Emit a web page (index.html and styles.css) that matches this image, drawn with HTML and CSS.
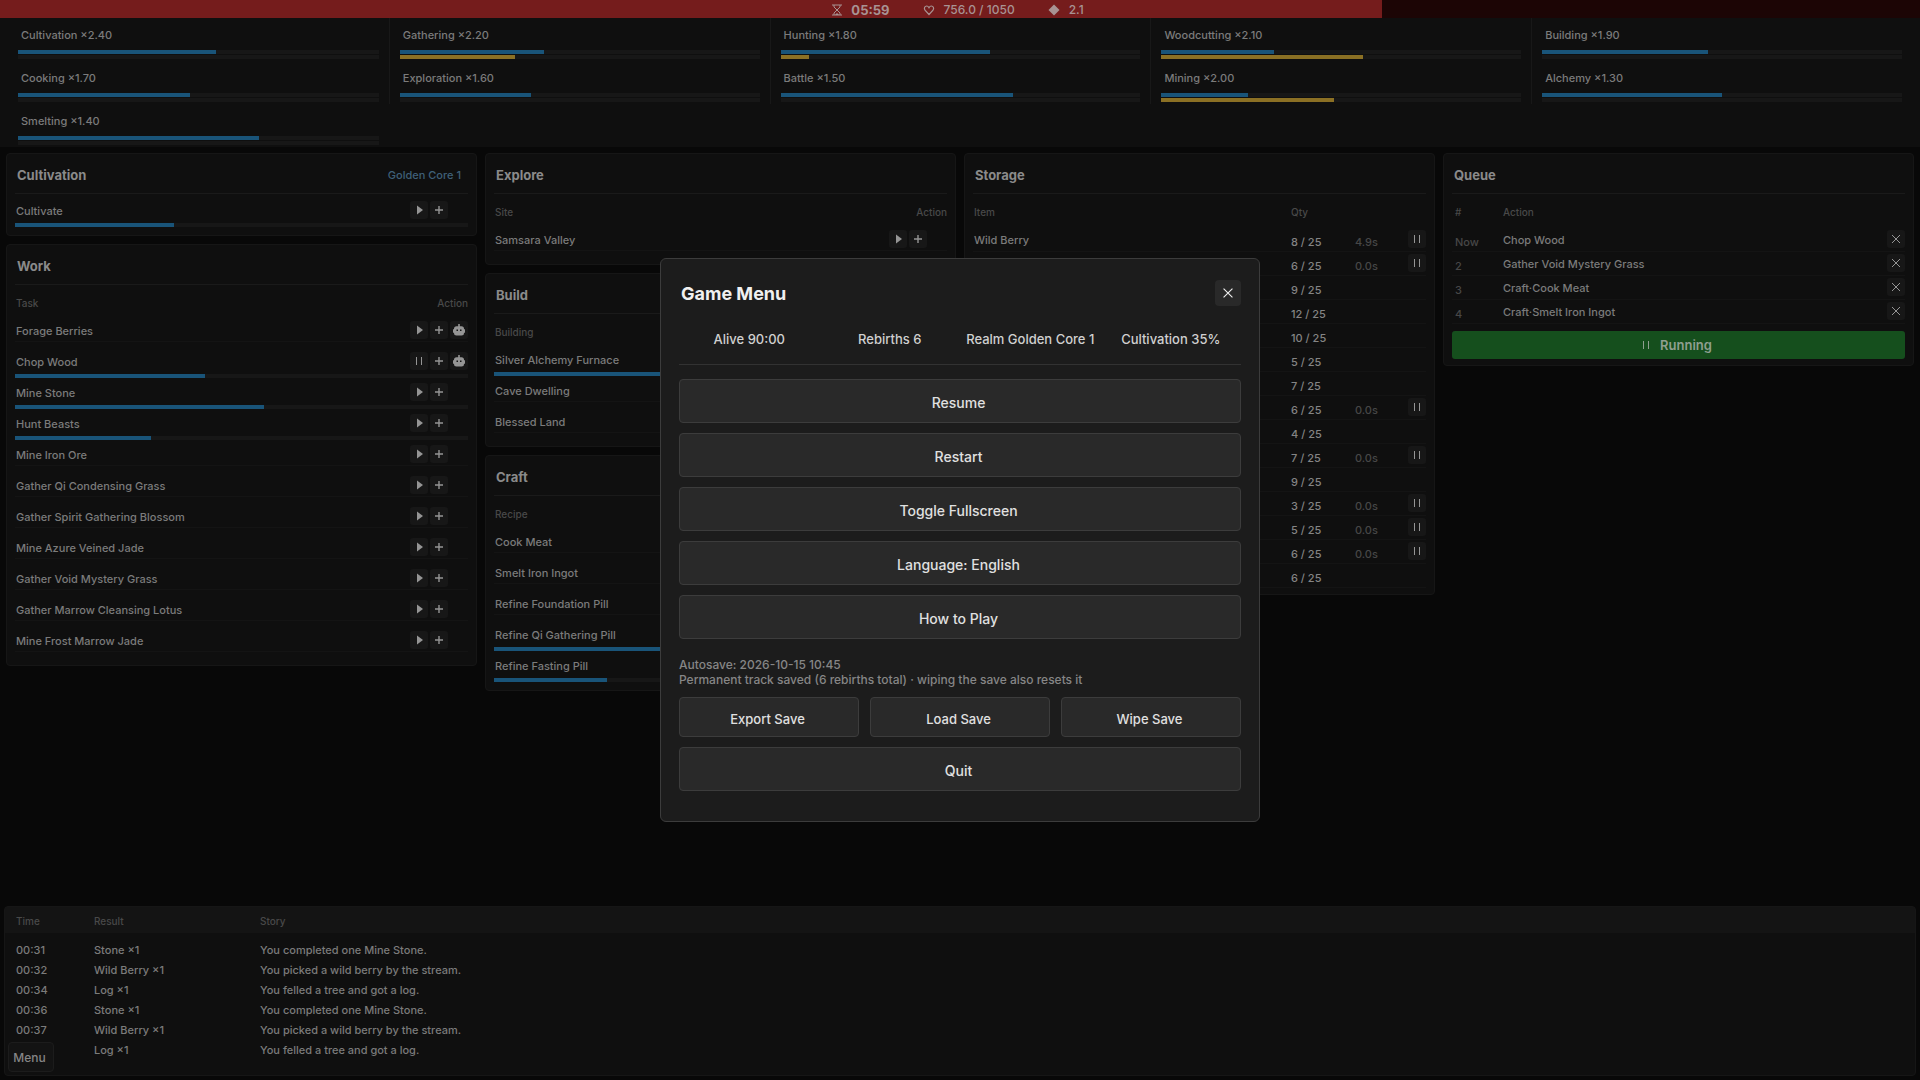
FILE: index.html
```html
<!DOCTYPE html>
<html lang="en">
<head>
<meta charset="utf-8">
<title>Game Menu</title>
<link rel="stylesheet" href="styles.css">
</head>
<body>
<svg class="sprite" aria-hidden="true">
  <symbol id="play" viewBox="0 0 18 18"><path d="M7 4.500l6 4.500-6 4.500z" fill="currentColor"/></symbol>
  <symbol id="plus" viewBox="0 0 18 18"><path d="M5 9h8M9 5v8" stroke="currentColor" stroke-width="1.400" fill="none"/></symbol>
  <symbol id="pause" viewBox="0 0 18 18"><path d="M6.500 5v8M11.500 5v8" stroke="currentColor" fill="none"/></symbol>
  <symbol id="cross" viewBox="0 0 18 18"><path d="M5 5l8 8M13 5l-8 8" stroke="currentColor" fill="none"/></symbol>
  <symbol id="robot" viewBox="0 0 18 18"><path fill="currentColor" fill-rule="evenodd" d="M8.200 3h1.600v2.200h1.700a2.500 2.500 0 0 1 2.500 2.500v.600h1v3.400h-1v.300a2.500 2.500 0 0 1-2.500 2.500h-5A2.500 2.500 0 0 1 4 12v-.300H3V8.300h1v-.600a2.500 2.500 0 0 1 2.500-2.500h1.700zM6.500 8.500V10H8V8.500zM10 8.500V10h1.500V8.500z"/></symbol>
</svg>

<div class="game">
  <header class="vitals">
    <div class="vitals-fill" style="width:72%"></div>
    <div class="vitals-text">
      <span class="vital strong"><svg width="10" height="12" viewBox="0 0 10 12"><path d="M0 1h10M0 11h10M2 1v2l3 3 3-3V1M2 11V9l3-3 3 3v2" fill="none" stroke="currentColor"/><path d="M3 11l2-2 2 2z" fill="currentColor"/></svg>05:59</span>
      <span class="vital"><svg width="12" height="12" viewBox="0 0 12 12"><path d="M6 10.500L2 6.200C.500 4 2 2 3.700 2 5 2 5.600 3 6 3.700 6.400 3 7 2 8.300 2 10 2 11.500 4 10 6.200z" fill="none" stroke="currentColor" stroke-width="1.200"/></svg>756.0 / 1050</span>
      <span class="vital"><svg width="12" height="12" viewBox="0 0 12 12"><path d="M6 .500L11.500 6 6 11.500.500 6z" fill="currentColor"/></svg>2.1</span>
    </div>
  </header>

  <section class="skills">
    <div class="skill"><span>Cultivation ×2.40</span><div class="bar"><i style="width:55%"></i></div><div class="bar gold"></div></div>
    <div class="skill"><span>Gathering ×2.20</span><div class="bar"><i style="width:40%"></i></div><div class="bar gold"><i style="width:32%"></i></div></div>
    <div class="skill"><span>Hunting ×1.80</span><div class="bar"><i style="width:58.200%"></i></div><div class="bar gold"><i style="width:8%"></i></div></div>
    <div class="skill"><span>Woodcutting ×2.10</span><div class="bar"><i style="width:31.300%"></i></div><div class="bar gold"><i style="width:56%"></i></div></div>
    <div class="skill"><span>Building ×1.90</span><div class="bar"><i style="width:46%"></i></div><div class="bar gold"></div></div>
    <div class="skill"><span>Cooking ×1.70</span><div class="bar"><i style="width:47.600%"></i></div><div class="bar gold"></div></div>
    <div class="skill"><span>Exploration ×1.60</span><div class="bar"><i style="width:36.600%"></i></div><div class="bar gold"></div></div>
    <div class="skill"><span>Battle ×1.50</span><div class="bar"><i style="width:64.700%"></i></div><div class="bar gold"></div></div>
    <div class="skill"><span>Mining ×2.00</span><div class="bar"><i style="width:24.200%"></i></div><div class="bar gold"><i style="width:48%"></i></div></div>
    <div class="skill"><span>Alchemy ×1.30</span><div class="bar"><i style="width:50%"></i></div><div class="bar gold"></div></div>
    <div class="skill"><span>Smelting ×1.40</span><div class="bar"><i style="width:66.700%"></i></div><div class="bar gold"></div></div>
  </section>

  <main class="board">
    <div class="column">
      <section class="card">
        <div class="card-head"><h2>Cultivation</h2><span class="realm">Golden Core 1</span></div>
        <table class="tasks">
          <tr class="busy"><td>Cultivate</td><td class="acts"><button class="mini" aria-label="Start"><svg><use href="#play"/></svg></button><button class="mini" aria-label="Add"><svg><use href="#plus"/></svg></button></td><td class="track"><div class="bar"><i style="width:35%"></i></div></td></tr>
        </table>
      </section>
      <section class="card">
        <div class="card-head"><h2>Work</h2></div>
        <table class="tasks">
          <tr class="labels"><th>Task</th><th>Action</th></tr>
          <tr><td>Forage Berries</td><td class="acts"><button class="mini" aria-label="Start"><svg><use href="#play"/></svg></button><button class="mini" aria-label="Add"><svg><use href="#plus"/></svg></button><button class="mini" aria-label="Automate"><svg><use href="#robot"/></svg></button></td></tr>
          <tr class="busy"><td>Chop Wood</td><td class="acts"><button class="mini" aria-label="Pause"><svg><use href="#pause"/></svg></button><button class="mini" aria-label="Add"><svg><use href="#plus"/></svg></button><button class="mini" aria-label="Automate"><svg><use href="#robot"/></svg></button></td><td class="track"><div class="bar"><i style="width:42%"></i></div></td></tr>
          <tr class="busy"><td>Mine Stone</td><td class="acts"><button class="mini" aria-label="Start"><svg><use href="#play"/></svg></button><button class="mini" aria-label="Add"><svg><use href="#plus"/></svg></button></td><td class="track"><div class="bar"><i style="width:55%"></i></div></td></tr>
          <tr class="busy"><td>Hunt Beasts</td><td class="acts"><button class="mini" aria-label="Start"><svg><use href="#play"/></svg></button><button class="mini" aria-label="Add"><svg><use href="#plus"/></svg></button></td><td class="track"><div class="bar"><i style="width:30%"></i></div></td></tr>
          <tr><td>Mine Iron Ore</td><td class="acts"><button class="mini" aria-label="Start"><svg><use href="#play"/></svg></button><button class="mini" aria-label="Add"><svg><use href="#plus"/></svg></button></td></tr>
          <tr><td>Gather Qi Condensing Grass</td><td class="acts"><button class="mini" aria-label="Start"><svg><use href="#play"/></svg></button><button class="mini" aria-label="Add"><svg><use href="#plus"/></svg></button></td></tr>
          <tr><td>Gather Spirit Gathering Blossom</td><td class="acts"><button class="mini" aria-label="Start"><svg><use href="#play"/></svg></button><button class="mini" aria-label="Add"><svg><use href="#plus"/></svg></button></td></tr>
          <tr><td>Mine Azure Veined Jade</td><td class="acts"><button class="mini" aria-label="Start"><svg><use href="#play"/></svg></button><button class="mini" aria-label="Add"><svg><use href="#plus"/></svg></button></td></tr>
          <tr><td>Gather Void Mystery Grass</td><td class="acts"><button class="mini" aria-label="Start"><svg><use href="#play"/></svg></button><button class="mini" aria-label="Add"><svg><use href="#plus"/></svg></button></td></tr>
          <tr><td>Gather Marrow Cleansing Lotus</td><td class="acts"><button class="mini" aria-label="Start"><svg><use href="#play"/></svg></button><button class="mini" aria-label="Add"><svg><use href="#plus"/></svg></button></td></tr>
          <tr><td>Mine Frost Marrow Jade</td><td class="acts"><button class="mini" aria-label="Start"><svg><use href="#play"/></svg></button><button class="mini" aria-label="Add"><svg><use href="#plus"/></svg></button></td></tr>
        </table>
      </section>
    </div>

    <div class="column">
      <section class="card">
        <div class="card-head"><h2>Explore</h2></div>
        <table class="tasks">
          <tr class="labels"><th>Site</th><th>Action</th></tr>
          <tr><td>Samsara Valley</td><td class="acts"><button class="mini" aria-label="Start"><svg><use href="#play"/></svg></button><button class="mini" aria-label="Add"><svg><use href="#plus"/></svg></button></td></tr>
        </table>
      </section>
      <section class="card">
        <div class="card-head"><h2>Build</h2></div>
        <table class="tasks">
          <tr class="labels"><th>Building</th><th></th></tr>
          <tr class="busy"><td>Silver Alchemy Furnace</td><td class="acts"></td><td class="track"><div class="bar"><i style="width:60%"></i></div></td></tr>
          <tr><td>Cave Dwelling</td><td class="acts"></td></tr>
          <tr><td>Blessed Land</td><td class="acts"></td></tr>
        </table>
      </section>
      <section class="card">
        <div class="card-head"><h2>Craft</h2></div>
        <table class="tasks">
          <tr class="labels"><th>Recipe</th><th></th></tr>
          <tr><td>Cook Meat</td><td class="acts"></td></tr>
          <tr><td>Smelt Iron Ingot</td><td class="acts"></td></tr>
          <tr><td>Refine Foundation Pill</td><td class="acts"></td></tr>
          <tr class="busy"><td>Refine Qi Gathering Pill</td><td class="acts"></td><td class="track"><div class="bar"><i style="width:60%"></i></div></td></tr>
          <tr class="busy"><td>Refine Fasting Pill</td><td class="acts"></td><td class="track"><div class="bar"><i style="width:25%"></i></div></td></tr>
        </table>
      </section>
    </div>

    <div class="column">
      <section class="card snug">
        <div class="card-head"><h2>Storage</h2></div>
        <table class="rows stock">
          <tr class="labels"><th>Item</th><th>Qty</th><th></th><th></th></tr>
          <tr><td>Wild Berry</td><td class="qty">8 / 25</td><td class="dim">4.9s</td><td class="end"><button class="mini" aria-label="Pause"><svg><use href="#pause"/></svg></button></td></tr>
          <tr><td></td><td class="qty">6 / 25</td><td class="dim">0.0s</td><td class="end"><button class="mini" aria-label="Pause"><svg><use href="#pause"/></svg></button></td></tr>
          <tr><td></td><td class="qty">9 / 25</td><td></td><td></td></tr>
          <tr><td></td><td class="qty">12 / 25</td><td></td><td></td></tr>
          <tr><td></td><td class="qty">10 / 25</td><td></td><td></td></tr>
          <tr><td></td><td class="qty">5 / 25</td><td></td><td></td></tr>
          <tr><td></td><td class="qty">7 / 25</td><td></td><td></td></tr>
          <tr><td></td><td class="qty">6 / 25</td><td class="dim">0.0s</td><td class="end"><button class="mini" aria-label="Pause"><svg><use href="#pause"/></svg></button></td></tr>
          <tr><td></td><td class="qty">4 / 25</td><td></td><td></td></tr>
          <tr><td></td><td class="qty">7 / 25</td><td class="dim">0.0s</td><td class="end"><button class="mini" aria-label="Pause"><svg><use href="#pause"/></svg></button></td></tr>
          <tr><td></td><td class="qty">9 / 25</td><td></td><td></td></tr>
          <tr><td></td><td class="qty">3 / 25</td><td class="dim">0.0s</td><td class="end"><button class="mini" aria-label="Pause"><svg><use href="#pause"/></svg></button></td></tr>
          <tr><td></td><td class="qty">5 / 25</td><td class="dim">0.0s</td><td class="end"><button class="mini" aria-label="Pause"><svg><use href="#pause"/></svg></button></td></tr>
          <tr><td></td><td class="qty">6 / 25</td><td class="dim">0.0s</td><td class="end"><button class="mini" aria-label="Pause"><svg><use href="#pause"/></svg></button></td></tr>
          <tr><td></td><td class="qty">6 / 25</td><td></td><td></td></tr>
        </table>
      </section>
    </div>

    <div class="column">
      <section class="card snug">
        <div class="card-head"><h2>Queue</h2></div>
        <table class="rows queue">
          <tr class="labels"><th>#</th><th>Action</th><th></th></tr>
          <tr><td class="dim">Now</td><td>Chop Wood</td><td class="end"><button class="mini" aria-label="Remove"><svg><use href="#cross"/></svg></button></td></tr>
          <tr><td class="dim">2</td><td>Gather Void Mystery Grass</td><td class="end"><button class="mini" aria-label="Remove"><svg><use href="#cross"/></svg></button></td></tr>
          <tr><td class="dim">3</td><td>Craft·Cook Meat</td><td class="end"><button class="mini" aria-label="Remove"><svg><use href="#cross"/></svg></button></td></tr>
          <tr><td class="dim">4</td><td>Craft·Smelt Iron Ingot</td><td class="end"><button class="mini" aria-label="Remove"><svg><use href="#cross"/></svg></button></td></tr>
        </table>
        <button class="running"><svg><use href="#pause"/></svg>Running</button>
      </section>
    </div>
  </main>

  <footer class="log">
    <table>
      <thead><tr><th>Time</th><th>Result</th><th>Story</th></tr></thead>
      <tbody>
        <tr><td>00:31</td><td>Stone ×1</td><td>You completed one Mine Stone.</td></tr>
        <tr><td>00:32</td><td>Wild Berry ×1</td><td>You picked a wild berry by the stream.</td></tr>
        <tr><td>00:34</td><td>Log ×1</td><td>You felled a tree and got a log.</td></tr>
        <tr><td>00:36</td><td>Stone ×1</td><td>You completed one Mine Stone.</td></tr>
        <tr><td>00:37</td><td>Wild Berry ×1</td><td>You picked a wild berry by the stream.</td></tr>
        <tr><td></td><td>Log ×1</td><td>You felled a tree and got a log.</td></tr>
      </tbody>
    </table>
    <button class="menu-button">Menu</button>
  </footer>
</div>

<div class="overlay">
  <div class="dialog" role="dialog" aria-labelledby="menu-title">
    <div class="dialog-head"><h1 id="menu-title">Game Menu</h1><button class="close" aria-label="Close"><svg><use href="#cross"/></svg></button></div>
    <div class="stats"><span>Alive 90:00</span><span>Rebirths 6</span><span>Realm Golden Core 1</span><span>Cultivation 35%</span></div>
    <div class="choices">
      <button class="choice">Resume</button>
      <button class="choice">Restart</button>
      <button class="choice">Toggle Fullscreen</button>
      <button class="choice">Language: English</button>
      <button class="choice">How to Play</button>
    </div>
    <p class="note">Autosave: 2026-10-15 10:45<br>Permanent track saved (6 rebirths total) · wiping the save also resets it</p>
    <div class="saves"><button class="choice small">Export Save</button><button class="choice small">Load Save</button><button class="choice small">Wipe Save</button></div>
    <button class="choice">Quit</button>
  </div>
</div>
</body>
</html>
```
FILE: styles.css
```css
* { box-sizing: border-box; }
body {
  margin: 0;
  background: #080808;
  color: #7b7b7b;
  font: 500 11px/16px Inter, "Liberation Sans", sans-serif;
}
button {
  margin: 0;
  padding: 0;
  border: 0;
  font: inherit;
  color: inherit;
}
h1, h2, p { margin: 0; }
table { width: 100%; border-collapse: collapse; }
td, th { padding: 0; text-align: left; font-weight: inherit; }
.sprite { display: none; }
.game { display: flex; flex-direction: column; min-height: 100vh; }

/* health strip */
.vitals { position: relative; height: 18px; background: #1c0505; }
.vitals-fill { height: 100%; background: #751c1c; }
.vitals-text {
  position: absolute;
  inset: 0;
  display: flex;
  justify-content: center;
  gap: 33px;
  padding: 2px 4px 0 0;
  color: #a89393;
  font-size: 12px;
}
.vital { display: flex; align-items: center; gap: 9px; }
.strong { font-size: 13px; font-weight: 700; }

/* skills */
.skills {
  display: grid;
  grid-template-columns: repeat(5, 1fr);
  padding: 0 8px;
  background: #0f0f0f;
}
.skill { height: 43px; padding: 9px 10px 0; border-left: 1px solid #181818; }
.skill:nth-child(5n+1) { border-left: 0; }
.skill span { display: block; height: 23px; padding-left: 3px; }
.bar { height: 4px; background: #171717; }
.bar i { display: block; height: 100%; background: #195479; }
.bar.gold { margin-top: 1px; }
.bar.gold i { background: #8b7024; }

/* cards */
.board {
  display: grid;
  grid-template-columns: repeat(4, 1fr);
  gap: 8px;
  padding: 6px;
  flex: 1;
}
.column { display: flex; flex-direction: column; gap: 8px; }
.card {
  padding: 8px;
  border: 1px solid #161616;
  border-radius: 4px;
  background: #0f0f0f;
}
.snug { padding-bottom: 6px; }
.card-head {
  display: flex;
  justify-content: space-between;
  align-items: center;
  height: 32px;
  padding: 0 7px 5px 2px;
  margin-bottom: 2px;
  border-bottom: 1px solid #1a1a1a;
}
h2 { font-size: 13px; font-weight: 700; color: #8a8a8a; }
.realm { color: #3f6078; }
.labels { color: #494949; font-size: 10px; }

.tasks, .tasks tbody { display: block; }
.tasks tr {
  display: grid;
  grid-template-columns: 1fr 58px;
  grid-template-rows: 20px 6px;
  height: 31px;
  padding-top: 5px;
}
.tasks td:first-child, .tasks th:first-child { padding: 2px 0 0 1px; }
.tasks tr::after { content: ""; grid-column: 1 / -1; height: 1px; background: #141414; }
.tasks .busy::after { display: none; }
.tasks .labels { height: 29px; padding-top: 6px; }
.tasks .labels::after { display: none; }
.tasks th:last-child { text-align: right; padding-top: 2px; }
.acts { display: flex; gap: 2px; }
.tasks .track { grid-column: 1 / -1; padding-top: 2px; }

.mini {
  display: block;
  width: 18px;
  height: 18px;
  border-radius: 3px;
  background: #171717;
  color: #959595;
}
.mini svg { display: block; width: 18px; height: 18px; }

.rows { table-layout: fixed; }
.rows td { height: 24px; padding: 2px 0 0 1px; border-bottom: 1px solid #141414; }
.rows .labels th { height: 31px; padding: 1px 0 0 1px; }
.rows .qty, .rows .dim { padding-top: 6px; }
.rows .dim { color: #474747; }
.rows .end { padding: 0; }
.rows .end .mini { margin-left: auto; }
.qty { color: #848484; }
.stock th:nth-child(1) { width: 317px; }
.stock th:nth-child(2) { width: 64px; }
.stock th:nth-child(3) { width: 40px; }
.queue th:nth-child(1) { width: 50px; }
.queue th:nth-child(3) { width: 40px; }
.queue td:first-child, .queue th:first-child { padding-left: 3px; }

.running {
  display: flex;
  justify-content: center;
  align-items: center;
  gap: 5px;
  width: 100%;
  height: 28px;
  padding-right: 8px;
  margin-top: 7px;
  border-radius: 3px;
  background: #154f1d;
  color: #8f9f90;
  font-size: 13px;
  font-weight: 600;
}
.running svg { width: 18px; height: 18px; }

/* event log */
.log {
  position: relative;
  min-height: 170px;
  margin: 0 4px 4px;
  border: 1px solid #161616;
  border-radius: 4px;
  background: #0f0f0f;
}
.log thead tr { background: #141414; color: #494949; font-size: 10px; }
.log thead th { height: 26px; padding-top: 2px; }
.log td { height: 20px; }
.log tbody::before { content: ""; display: block; height: 7px; }
.log th:nth-child(1) { width: 89px; }
.log th:nth-child(2) { width: 166px; }
.log tr > :first-child { padding-left: 11px; }
.menu-button {
  position: absolute;
  left: 3px;
  bottom: 3px;
  width: 46px;
  height: 30px;
  padding: 2px 3px 0 0;
  border: 1px solid #1c1c1c;
  border-radius: 4px;
  background: #131313;
  color: #858585;
  font-size: 12px;
}

/* dialog */
.overlay { position: fixed; inset: 0; display: grid; place-items: center; }
.dialog {
  width: 600px;
  padding: 21px 18px 30px;
  border: 1px solid #3c3c3c;
  border-radius: 6px;
  background: #1c1c1c;
  color: #d0d0d0;
}
.dialog-head { display: flex; justify-content: space-between; align-items: center; padding-left: 2px; }
h1 { padding-top: 2px; font-size: 18px; line-height: 24px; font-weight: 700; color: #f0f0f0; }
.close {
  display: grid;
  place-items: center;
  width: 26px;
  height: 26px;
  border-radius: 4px;
  background: #292929;
  color: #f0f0f0;
}
.close svg { width: 20px; height: 20px; }
.stats {
  display: grid;
  grid-template-columns: repeat(4, 1fr);
  padding: 25px 0 17px;
  margin-bottom: 14px;
  border-bottom: 1px solid #323232;
  text-align: center;
  font-size: 13px;
}
.choices { display: grid; gap: 10px; }
.choice {
  width: 100%;
  height: 44px;
  padding: 4px 3px 0 0;
  border: 1px solid #3c3c3c;
  border-radius: 4px;
  background: #292929;
  color: #e0e0e0;
  font-size: 14px;
}
.small { height: 40px; font-size: 13px; }
.note { padding: 18px 0 10px; font-size: 12px; line-height: 15px; color: #868686; }
.saves { display: grid; grid-template-columns: repeat(3, 1fr); gap: 11px; margin-bottom: 10px; }
```
